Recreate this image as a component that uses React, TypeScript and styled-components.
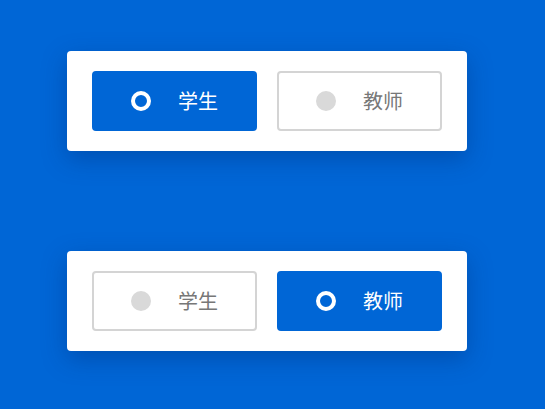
import React, { useState } from "react";
import styled, { createGlobalStyle } from "styled-components";

const GlobalStyle = createGlobalStyle`
  html, body {
    margin: 0;
    padding: 0;
    background: #0066d6;
    font-family: "Noto Sans CJK SC", "Noto Sans", sans-serif;
  }
`;

type Role = "student" | "teacher";

const options: { value: Role; label: string }[] = [
  { value: "student", label: "学生" },
  { value: "teacher", label: "教师" },
];

const RoleSwitch: React.FC<{ initial: Role }> = ({ initial }) => {
  const [role, setRole] = useState<Role>(initial);

  return (
    <StyledCard>
      {options.map((option) => (
        <StyledOption
          key={option.value}
          $active={role === option.value}
          onClick={() => setRole(option.value)}
        >
          <StyledDot $active={role === option.value} />
          <StyledLabel>{option.label}</StyledLabel>
        </StyledOption>
      ))}
    </StyledCard>
  );
};

export default function App() {
  return (
    <>
      <GlobalStyle />
      <StyledPage>
        <RoleSwitch initial="student" />
        <RoleSwitch initial="teacher" />
      </StyledPage>
    </>
  );
}

const StyledPage = styled.div`
  width: 545px;
  height: 409px;
  box-sizing: border-box;
  padding: 51px 0 0 67px;
  display: flex;
  flex-direction: column;
  gap: 100px;
`;

const StyledCard = styled.div`
  width: 400px;
  height: 100px;
  box-sizing: border-box;
  padding: 20px 25px;
  display: flex;
  gap: 20px;
  background: #ffffff;
  border-radius: 4px;
  box-shadow: 0 8px 24px rgba(0, 40, 110, 0.35);
`;

const StyledOption = styled.button<{ $active: boolean }>`
  width: 165px;
  height: 60px;
  box-sizing: border-box;
  padding: 0;
  display: flex;
  align-items: center;
  justify-content: center;
  gap: 27px;
  border-radius: 4px;
  cursor: pointer;
  font-family: inherit;
  font-size: 20px;
  background: ${({ $active }) => ($active ? "#0066d6" : "#ffffff")};
  border: 2px solid ${({ $active }) => ($active ? "#0066d6" : "#d4d4d4")};
  color: ${({ $active }) => ($active ? "#ffffff" : "#777777")};
`;

const StyledDot = styled.span<{ $active: boolean }>`
  width: 20px;
  height: 20px;
  box-sizing: border-box;
  border-radius: 50%;
  background: ${({ $active }) => ($active ? "#0066d6" : "#d9d9d9")};
  border: ${({ $active }) => ($active ? "4px solid #ffffff" : "none")};
`;

const StyledLabel = styled.span`
  line-height: 1;
`;
